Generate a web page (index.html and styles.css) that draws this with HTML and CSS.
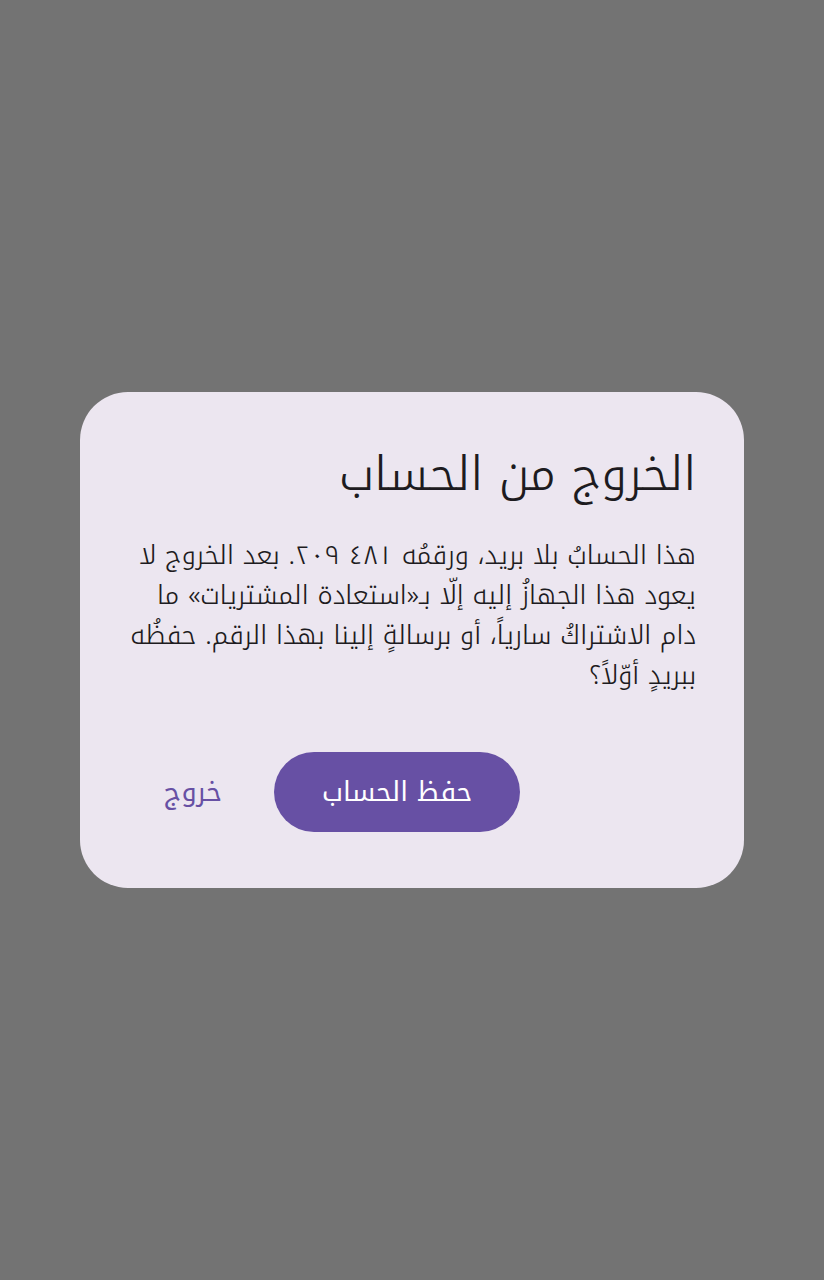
FILE: index.html
```html
<!DOCTYPE html>
<html lang="ar" dir="rtl">
<head>
<meta charset="utf-8">
<link rel="stylesheet" href="styles.css">
</head>
<body>
<div class="scrim">
  <div class="dialog" role="dialog">
    <h1 class="title">الخروج من الحساب</h1>
    <p class="body-text">هذا الحسابُ بلا بريد، ورقمُه ٤٨١ ٢٠٩. بعد الخروج لا يعود هذا الجهازُ إليه إلّا بـ«استعادة المشتريات» ما دام الاشتراكُ سارياً، أو برسالةٍ إلينا بهذا الرقم. حفظُه ببريدٍ أوّلاً؟</p>
    <div class="actions">
      <button class="btn btn-filled">حفظ الحساب</button>
      <button class="btn btn-text">خروج</button>
    </div>
  </div>
</div>
</body>
</html>
```

FILE: styles.css
```css
html, body {
  margin: 0;
  padding: 0;
}
body {
  background: #737373;
  font-family: "Noto Kufi Arabic", "Noto Sans Arabic", "DejaVu Sans", sans-serif;
}
.scrim {
  width: 824px;
  height: 1280px;
  display: flex;
  align-items: center;
  justify-content: center;
}
.dialog {
  width: 664px;
  box-sizing: border-box;
  background: #ECE6F0;
  border-radius: 48px;
  padding: 55px 48px 56px;
  color: #1D1B20;
}
.title {
  margin: 0;
  font-size: 47px;
  line-height: 56px;
  font-weight: 300;
}
.body-text {
  margin: 33px 0 0;
  font-size: 26px;
  line-height: 40px;
  font-weight: 300;
}
.actions {
  margin-top: 56px;
  display: flex;
  justify-content: flex-end;
  gap: 16px;
}
.btn {
  font-family: inherit;
  font-size: 27px;
  font-weight: 400;
  height: 80px;
  border-radius: 40px;
  border: none;
  cursor: pointer;
}
.btn-filled {
  background: #6750A4;
  color: #FFFFFF;
  padding: 0 48px;
}
.btn-text {
  background: transparent;
  color: #6750A4;
  padding: 0 36px;
}
```
